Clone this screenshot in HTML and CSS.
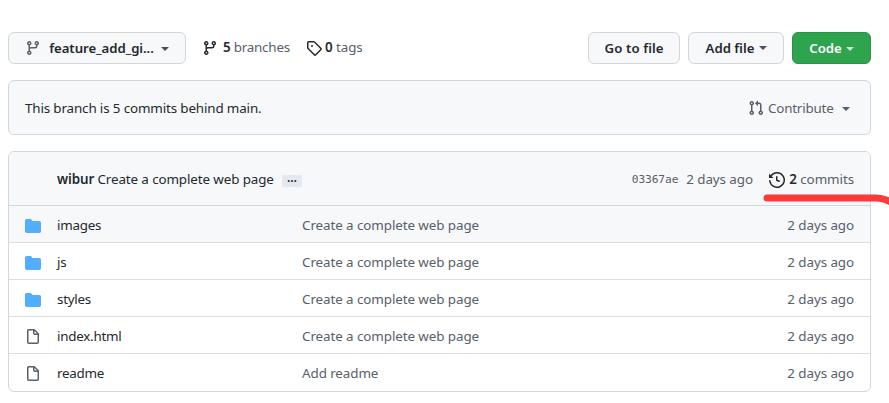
FILE: index.html
```
<!DOCTYPE html>
<html lang="en">
<head>
<meta charset="utf-8">
<title>Repository files</title>
<link rel="stylesheet" href="styles.css">
</head>
<body>
<svg class="defs" width="0" height="0" aria-hidden="true">
<symbol id="branch" viewBox="0 0 16 16"><path d="M11.75 2.5a.75.75 0 100 1.5.75.75 0 000-1.5zm-2.25.75a2.25 2.25 0 113 2.122V6A2.5 2.5 0 0110 8.5H6a1 1 0 00-1 1v1.128a2.251 2.251 0 11-1.5 0V5.372a2.25 2.25 0 111.5 0v1.836A2.492 2.492 0 016 7h4a1 1 0 001-1v-.628A2.25 2.25 0 019.5 3.25zM4.25 12a.75.75 0 100 1.5.75.75 0 000-1.5zM3.5 3.25a.75.75 0 111.5 0 .75.75 0 01-1.5 0z" fill-rule="evenodd"/></symbol>
<symbol id="tag" viewBox="0 0 16 16"><path d="M2.5 7.775V2.75a.25.25 0 01.25-.25h5.025a.25.25 0 01.177.073l6.25 6.25a.25.25 0 010 .354l-5.025 5.025a.25.25 0 01-.354 0l-6.25-6.25a.25.25 0 01-.073-.177zm-1.5 0V2.75C1 1.784 1.784 1 2.75 1h5.025c.464 0 .91.184 1.238.513l6.25 6.25a1.75 1.75 0 010 2.474l-5.026 5.026a1.75 1.75 0 01-2.474 0l-6.25-6.25A1.75 1.75 0 011 7.775zM6 5a1 1 0 100 2 1 1 0 000-2z" fill-rule="evenodd"/></symbol>
<symbol id="pull" viewBox="0 0 16 16"><path d="M7.177 3.073L9.573.677A.25.25 0 0110 .854v4.792a.25.25 0 01-.427.177L7.177 3.427a.25.25 0 010-.354zM3.75 2.5a.75.75 0 100 1.5.75.75 0 000-1.5zm-2.25.75a2.25 2.25 0 113 2.122v5.256a2.251 2.251 0 11-1.5 0V5.372A2.25 2.25 0 011.5 3.25zM11 2.5h-1V4h1a1 1 0 011 1v5.628a2.251 2.251 0 101.5 0V5A2.5 2.5 0 0011 2.5zm1 10.25a.75.75 0 111.5 0 .75.75 0 01-1.5 0zM3.75 12a.75.75 0 100 1.5.75.75 0 000-1.5z" fill-rule="evenodd"/></symbol>
<symbol id="history" viewBox="0 0 16 16"><path d="M1.643 3.143L.427 1.927A.25.25 0 000 2.104V5.75c0 .138.112.25.25.25h3.646a.25.25 0 00.177-.427L2.715 4.215a6.5 6.5 0 11-1.18 4.458.75.75 0 10-1.493.154 8.001 8.001 0 101.6-5.684zM7.75 4a.75.75 0 01.75.75v2.992l2.028.812a.75.75 0 01-.557 1.392l-2.5-1A.75.75 0 017 8.25v-3.5A.75.75 0 017.75 4z" fill-rule="evenodd"/></symbol>
<symbol id="folder" viewBox="0 0 16 16"><path d="M1.75 1A1.75 1.75 0 000 2.75v10.5C0 14.216.784 15 1.75 15h12.5A1.75 1.75 0 0016 13.25v-8.5A1.75 1.75 0 0014.25 3h-6.5a.25.25 0 01-.2-.1l-.9-1.2c-.33-.44-.85-.7-1.4-.7h-3.5z"/></symbol>
<symbol id="file" viewBox="0 0 16 16"><path d="M3.75 1.5a.25.25 0 00-.25.25v11.5c0 .138.112.25.25.25h8.5a.25.25 0 00.25-.25V6H9.75A1.75 1.75 0 018 4.25V1.5H3.75zm5.75.56v2.19c0 .138.112.25.25.25h2.19L9.5 2.06zM2 1.75C2 .784 2.784 0 3.75 0h5.086c.464 0 .909.184 1.237.513l3.414 3.414c.329.328.513.773.513 1.237v8.086A1.75 1.75 0 0112.25 15h-8.5A1.75 1.75 0 012 13.25V1.75z" fill-rule="evenodd"/></symbol>
</svg>
<main class="page">
<div class="toolbar">
<button class="btn btn-branch"><svg class="icon"><use href="#branch"/></svg><span class="branch-name">feature_add_gi...</span><i class="caret"></i></button>
<a class="stat stat-branches"><svg class="icon"><use href="#branch"/></svg><span><b>5</b> branches</span></a>
<a class="stat stat-tags"><svg class="icon"><use href="#tag"/></svg><span><b>0</b> tags</span></a>
<div class="actions">
<button class="btn btn-goto"><span>Go to file</span></button>
<button class="btn btn-add"><span>Add file</span><i class="caret"></i></button>
<button class="btn btn-code"><span>Code</span><i class="caret"></i></button>
</div>
</div>
<section class="notice">
<span class="notice-text">This branch is 5 commits behind main.</span>
<a class="contribute"><svg class="icon"><use href="#pull"/></svg><span>Contribute</span><i class="caret"></i></a>
</section>
<section class="files">
<header class="latest">
<span class="latest-text"><b>wibur</b> Create a complete web page</span><span class="more">…</span>
<span class="hash">03367ae</span><span class="when">2 days ago</span>
<a class="commits"><svg class="icon"><use href="#history"/></svg><span><b>2</b> commits</span></a>
</header>
<div class="row hovered"><svg class="icon folder"><use href="#folder"/></svg><span class="name">images</span><span class="message">Create a complete web page</span><span class="age">2 days ago</span></div>
<div class="row"><svg class="icon folder"><use href="#folder"/></svg><span class="name">js</span><span class="message">Create a complete web page</span><span class="age">2 days ago</span></div>
<div class="row"><svg class="icon folder"><use href="#folder"/></svg><span class="name">styles</span><span class="message">Create a complete web page</span><span class="age">2 days ago</span></div>
<div class="row"><svg class="icon"><use href="#file"/></svg><span class="name">index.html</span><span class="message">Create a complete web page</span><span class="age">2 days ago</span></div>
<div class="row"><svg class="icon"><use href="#file"/></svg><span class="name">readme</span><span class="message">Add readme</span><span class="age">2 days ago</span></div>
</section>
</main>
<svg class="marker" width="129" height="16" viewBox="0 0 129 16" aria-hidden="true"><path d="M7 8H116Q123 8 131 12" fill="none" stroke="#fc3a3a" stroke-width="7" stroke-linecap="round"/></svg>
</body>
</html>
```
FILE: styles.css
```
* { box-sizing: border-box; }
body {
  margin: 0;
  width: 889px;
  height: 403px;
  overflow: hidden;
  position: relative;
  background: #fff;
  color: #24292e;
  font: 13.4px/20px "Noto Sans", "Open Sans", sans-serif;
  letter-spacing: -0.08px;
}
.defs { display: block; }
.page { width: 863px; margin-left: 8px; padding-top: 32px; }
b { font-weight: 600; }
span { white-space: nowrap; }
.icon { width: 16px; height: 16px; flex: none; fill: #586069; }
.caret {
  flex: none;
  border: 4px solid transparent;
  border-top-color: currentColor;
  border-bottom: 0;
}
.toolbar { display: flex; height: 32px; align-items: center; }
.btn {
  display: flex;
  align-items: center;
  height: 32px;
  padding: 0 15px;
  border: 1px solid #d5d8da;
  border-radius: 6px;
  background: #f6f8fa;
  color: #24292e;
  font: 600 13.2px/20px "Noto Sans", "Open Sans", sans-serif;
}
.btn-branch { width: 178px; padding-left: 16px; letter-spacing: -0.06px; }
.branch-name { width: 105px; margin-left: 8px; }
.btn .caret { color: #4b5056; margin-top: 2px; }
.btn-branch .caret { margin-left: 7px; }
.stat { display: flex; align-items: center; color: #586069; }
.stat .icon { fill: #24292e; }
.stat span { margin-top: -2px; }
.stat b { color: #24292e; }
.stat-branches { width: 104px; gap: 5px; margin-left: 16px; letter-spacing: -0.22px; }
.stat-tags { gap: 3px; }
.actions { display: flex; gap: 8px; margin-left: auto; }
.btn-goto { width: 92px; }
.btn-goto span { letter-spacing: 0.1px; margin-left: 0.5px; }
.btn-add { width: 96px; padding-left: 16px; }
.btn-add span { width: 50px; }
.btn-add .caret { margin-left: 4px; margin-top: -1px; }
.btn-code { width: 79px; padding-left: 16px; background: #2ea44f; border-color: #2a9147; color: #fff; }
.btn-code span { width: 33px; }
.btn-code .caret { color: #cbe9d3; margin-left: 4px; }
.notice {
  display: flex;
  align-items: center;
  justify-content: space-between;
  height: 55px;
  margin-top: 16px;
  padding: 0 20px 0 16px;
  border: 1px solid #d1d7e0;
  border-radius: 6px;
  background: #f6f8fa;
}
.notice-text { letter-spacing: -0.14px; }
.contribute { display: flex; align-items: center; color: #586069; letter-spacing: -0.2px; }
.contribute span { width: 66px; margin-left: 4px; }
.contribute .caret { margin-left: 8px; margin-top: 2px; }
.files { height: 241px; margin-top: 16px; border: 1px solid #d1d7e0; border-radius: 6px; overflow: hidden; }
.latest { display: flex; align-items: center; height: 54px; padding: 2px 16px 0 48px; background: #f6f8fa; border-bottom: 1px solid #d1d7e0; }
.latest-text { width: 217px; margin-top: -2px; letter-spacing: -0.11px; }
.more { width: 20px; height: 12px; margin: 3px 0 0 8px; background: #e5e8ee; font-size: 12px; font-weight: 600; line-height: 6px; text-align: center; }
.hash { margin: 0 8px 0 auto; color: #586069; font: 11.2px/20px "DejaVu Sans Mono", monospace; letter-spacing: -0.1px; }
.when { width: 67px; margin-top: -2px; color: #586069; }
.commits { display: flex; align-items: center; gap: 4px; margin-left: 16px; color: #586069; }
.commits .icon { fill: #24292e; }
.commits span { margin-top: -2px; }
.commits b { color: #24292e; }
.row { display: grid; grid-template-columns: 16px 229px 1fr auto; column-gap: 16px; align-items: center; height: 37px; padding: 1px 16px 0; border-bottom: 1px solid #dadee5; }
.row:last-child { border-bottom: 0; }
.row.hovered { background: #f6f8fa; }
.row .icon { position: relative; top: 1px; }
.row .name { letter-spacing: -0.25px; }
.folder { fill: #54aeff; }
.message, .age { color: #586069; }
.marker { position: absolute; left: 760px; top: 190px; }
```
